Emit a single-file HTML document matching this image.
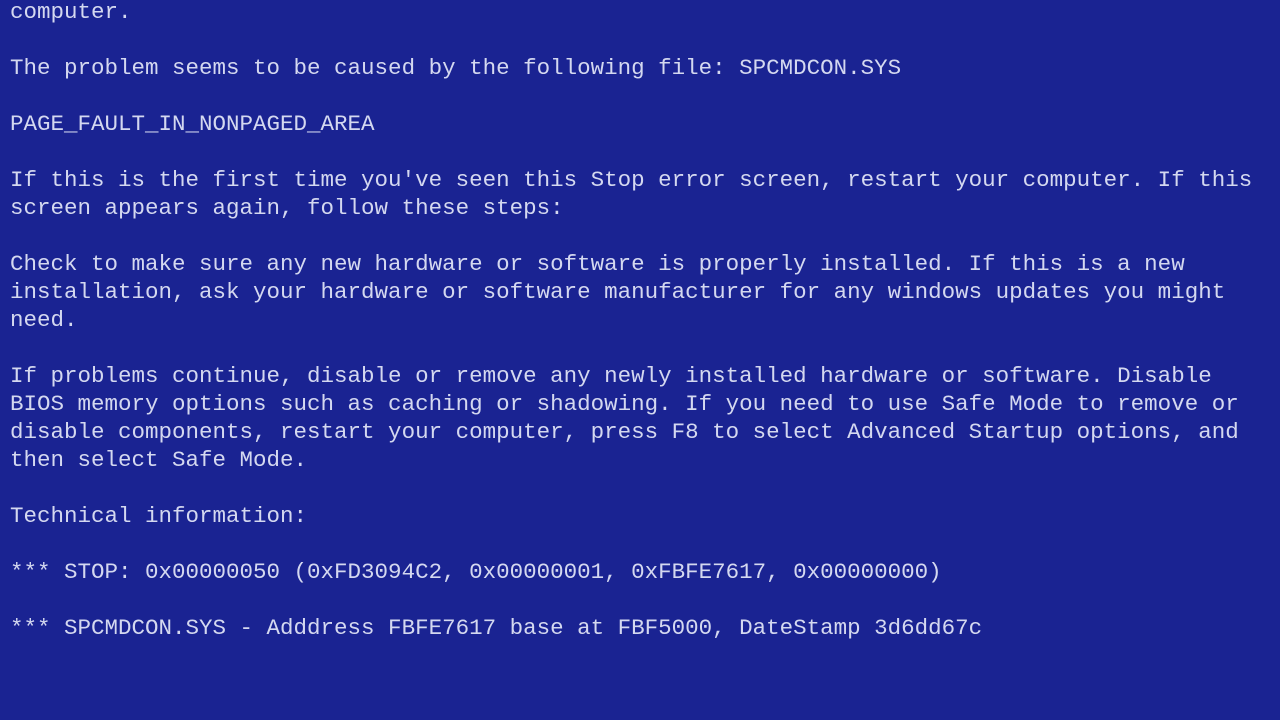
<!DOCTYPE html>
<html><head><meta charset="utf-8"><style>
html,body{margin:0;padding:0;width:1280px;height:720px;overflow:hidden;background:#1a2392;}
pre{margin:0;position:absolute;left:10px;top:-2px;font-family:"Nimbus Mono PS","Courier New","Liberation Mono",monospace;font-size:22.5px;line-height:28px;color:#d4d8f0;white-space:pre;}
</style></head><body>
<pre>computer.

The problem seems to be caused by the following file: SPCMDCON.SYS

PAGE_FAULT_IN_NONPAGED_AREA

If this is the first time you've seen this Stop error screen, restart your computer. If this
screen appears again, follow these steps:

Check to make sure any new hardware or software is properly installed. If this is a new
installation, ask your hardware or software manufacturer for any windows updates you might
need.

If problems continue, disable or remove any newly installed hardware or software. Disable
BIOS memory options such as caching or shadowing. If you need to use Safe Mode to remove or
disable components, restart your computer, press F8 to select Advanced Startup options, and
then select Safe Mode.

Technical information:

*** STOP: 0x00000050 (0xFD3094C2, 0x00000001, 0xFBFE7617, 0x00000000)

*** SPCMDCON.SYS - Adddress FBFE7617 base at FBF5000, DateStamp 3d6dd67c</pre>
</body></html>
